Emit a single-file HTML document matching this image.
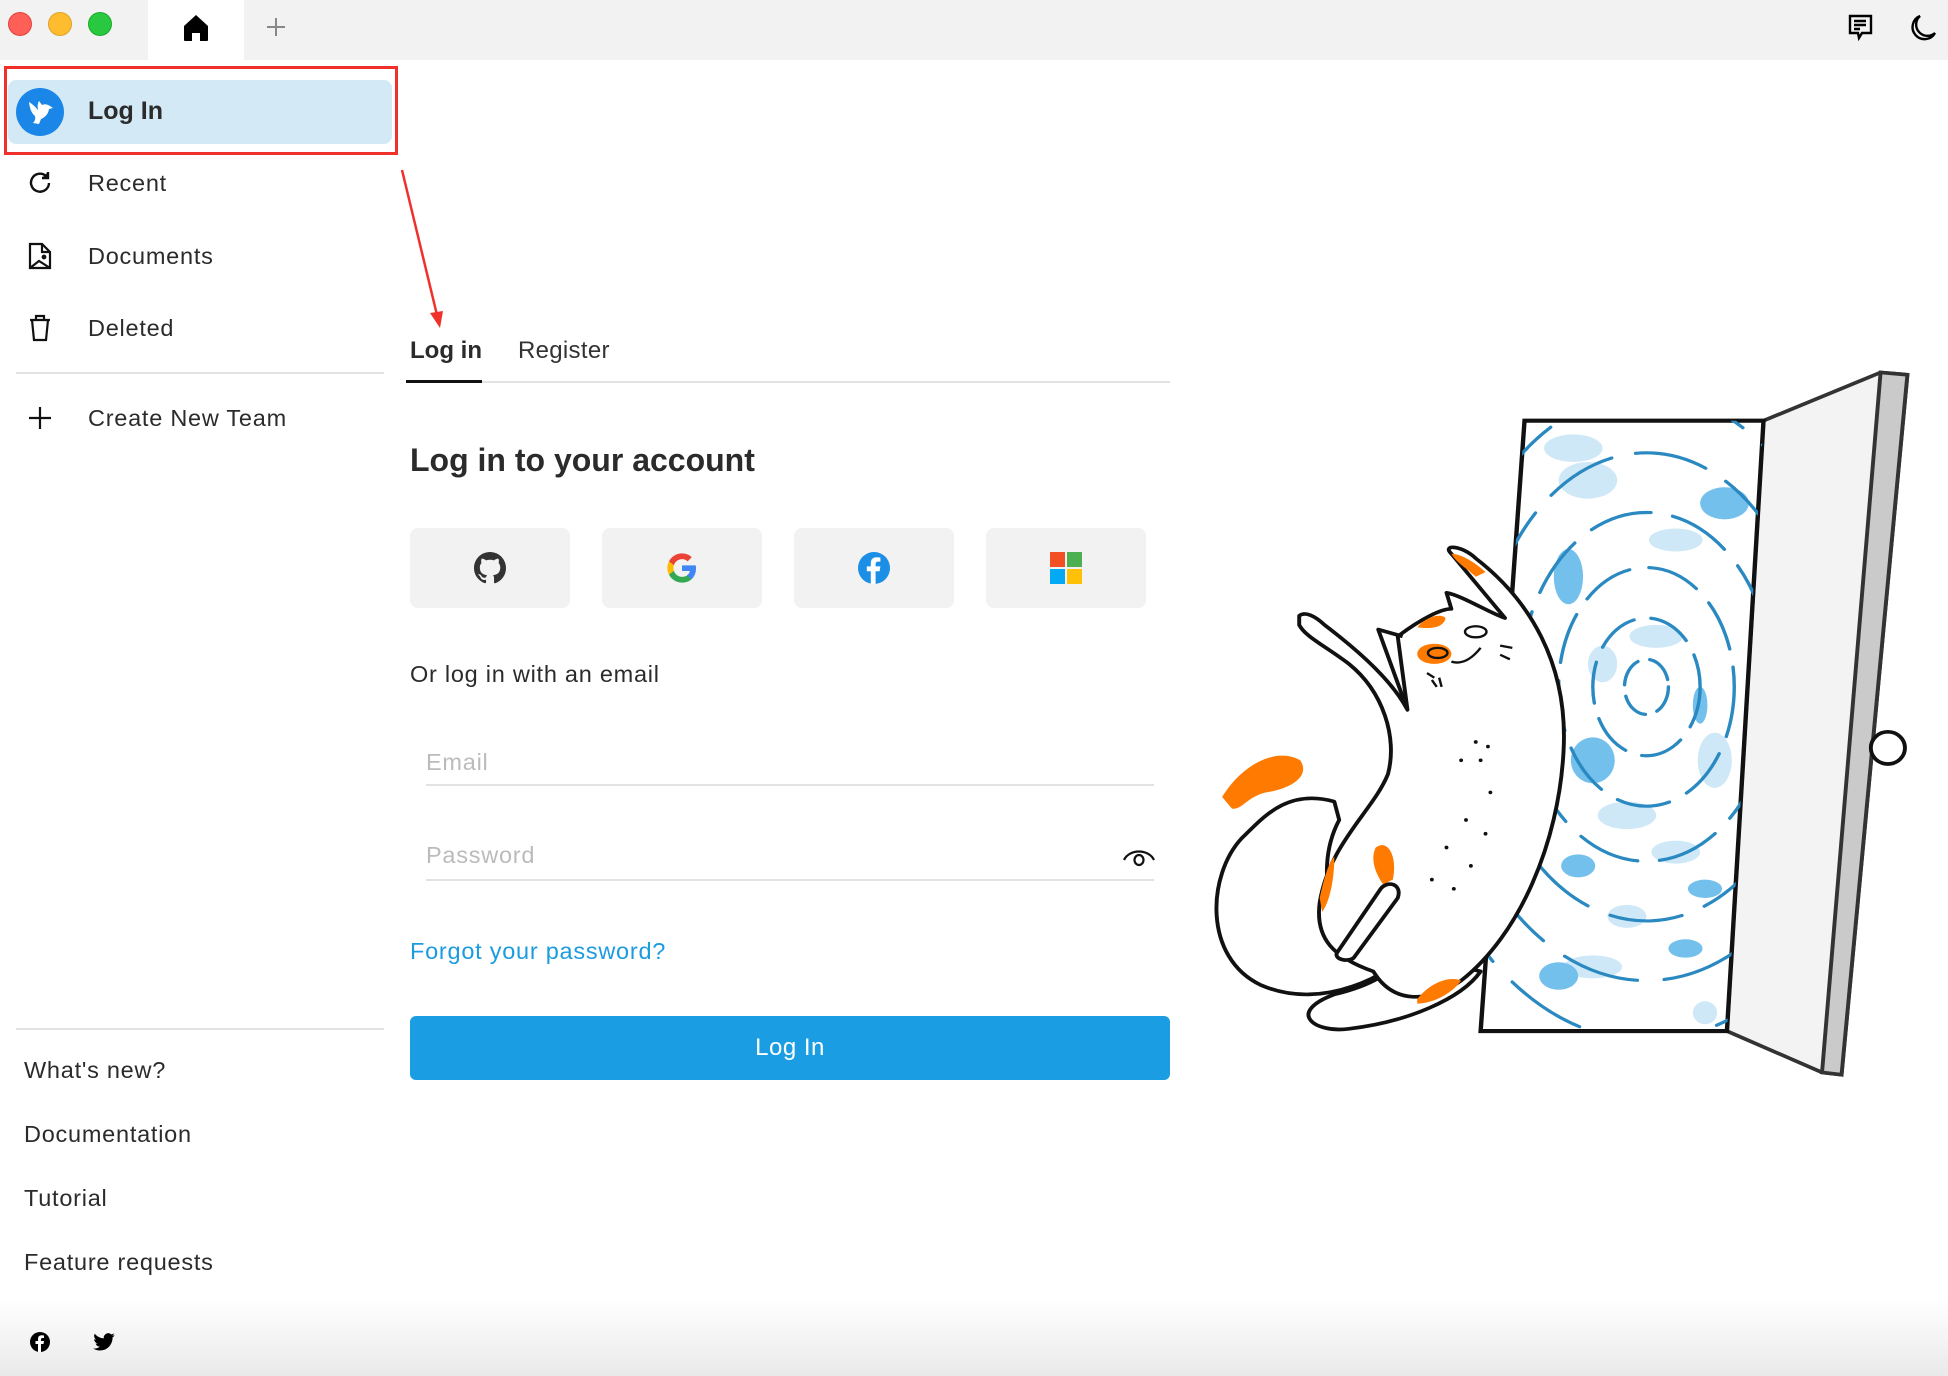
<!DOCTYPE html>
<html><head><meta charset="utf-8"><style>
*{margin:0;padding:0;box-sizing:border-box}
body{width:1948px;height:1376px;position:relative;overflow:hidden;background:#fff;font-family:"Liberation Sans",sans-serif;color:#2b2b2b}
.a{position:absolute}
.t{position:absolute;white-space:nowrap;line-height:1}
.s{font-size:23.5px;letter-spacing:0.75px}
</style></head><body>
<div class="a" style="left:0;top:0;width:1948px;height:60px;background:#f2f2f2"></div>
<div class="a" style="left:148px;top:0;width:96px;height:60px;background:#fff"></div>
<div class="a" style="left:8px;top:12px;width:24px;height:24px;border-radius:50%;background:#fe5f57;border:1px solid #e0443e"></div>
<div class="a" style="left:48px;top:12px;width:24px;height:24px;border-radius:50%;background:#febc2e;border:1px solid #dea123"></div>
<div class="a" style="left:88px;top:12px;width:24px;height:24px;border-radius:50%;background:#28c840;border:1px solid #1aab29"></div>
<svg class="a" style="left:183px;top:14px" width="26" height="28" viewBox="0 0 26 28"><path d="M13 1 L25 12 V26 Q25 27 24 27 H17 V19 H9 V27 H2 Q1 27 1 26 V12 Z" fill="#000"/></svg>
<svg class="a" style="left:266px;top:17px" width="20" height="20"><path d="M10 1V19M1 10H19" stroke="#888" stroke-width="2"/></svg>
<svg class="a" style="left:1847px;top:14px" width="28" height="28" viewBox="0 0 28 28" fill="none" stroke="#000" stroke-width="2.4"><path d="M3 2H24V19H15L12 24L11 19H3Z"/><path d="M7 7H19M7 11H19M7 15H13"/></svg>
<svg class="a" style="left:1908px;top:13px" width="30" height="30" viewBox="0 0 30 30" fill="none" stroke="#000" stroke-width="2.4"><path d="M12 3A12 12 0 1 0 27 20A11 11 0 0 1 12 3Z"/></svg>

<div class="a" style="left:4px;top:66px;width:394px;height:89px;border:3px solid #f0302a"></div>
<div class="a" style="left:8px;top:80px;width:384px;height:64px;border-radius:8px;background:#d3e9f6"></div>
<div class="a" style="left:16px;top:88px;width:48px;height:48px;border-radius:50%;background:#1a87e8"></div>
<svg class="a" style="left:24px;top:96px" width="32" height="32" viewBox="0 0 32 32"><path d="M5 6 Q10 9 14 14 Q13 8 15 5 L18 9 Q22 7 26 10 L29 12 L25 13 Q24 20 17 23 L15 28 L9 27 Q12 24 11 20 Q6 16 5 6Z" fill="#fff"/></svg>
<div class="t" style="left:88px;top:99px;font-size:25px;font-weight:bold;color:#2b2b2b">Log In</div>

<svg class="a" style="left:27px;top:170px" width="26" height="26" viewBox="0 0 26 26" fill="none" stroke="#111" stroke-width="2.4"><path d="M22 13A9 9 0 1 1 19 6"/><path d="M21 2V8H15" fill="#111"/></svg>
<div class="t s" style="left:88px;top:172px">Recent</div>
<svg class="a" style="left:28px;top:242px" width="24" height="28" viewBox="0 0 24 28" fill="none" stroke="#111" stroke-width="2.2"><path d="M2 2H14L22 10V26H2Z"/><path d="M14 2V10H22"/><path d="M2 26L11 19L22 26"/><circle cx="16" cy="15" r="1.3" fill="#111"/></svg>
<div class="t s" style="left:88px;top:245px">Documents</div>
<svg class="a" style="left:28px;top:314px" width="24" height="28" viewBox="0 0 24 28" fill="none" stroke="#111" stroke-width="2.2"><path d="M2 6H22M8 6V2H16V6M4 6L6 26H18L20 6"/></svg>
<div class="t s" style="left:88px;top:317px">Deleted</div>
<div class="a" style="left:16px;top:372px;width:368px;height:2px;background:#e3e3e3"></div>
<svg class="a" style="left:28px;top:406px" width="24" height="24"><path d="M12 1V23M1 12H23" stroke="#111" stroke-width="2.2"/></svg>
<div class="t s" style="left:88px;top:407px">Create New Team</div>

<div class="a" style="left:16px;top:1028px;width:368px;height:2px;background:#e3e3e3"></div>
<div class="t s" style="left:24px;top:1059px">What's new?</div>
<div class="t s" style="left:24px;top:1123px">Documentation</div>
<div class="t s" style="left:24px;top:1187px">Tutorial</div>
<div class="t s" style="left:24px;top:1251px">Feature requests</div>
<div class="a" style="left:0;top:1300px;width:1948px;height:76px;background:linear-gradient(#fff,#e9e9e9)"></div>
<svg class="a" style="left:30px;top:1332px" width="20" height="20" viewBox="0 0 20 20"><circle cx="10" cy="10" r="10" fill="#000"/><path d="M11 20V12H13.5L14 9H11V7.5Q11 6 12.5 6H14V3.5Q13 3.3 11.8 3.3Q8 3.3 8 7V9H5.5V12H8V20Z" fill="#fff"/></svg>
<svg class="a" style="left:93px;top:1333px" width="22" height="18" viewBox="0 0 24 20"><path d="M24 2.3A10 10 0 0 1 21.2 3 5 5 0 0 0 23.3 .4 10 10 0 0 1 20.2 1.6 5 5 0 0 0 11.8 6 14 14 0 0 1 1.7 .9 5 5 0 0 0 3.2 7.4 5 5 0 0 1 1 6.8 5 5 0 0 0 4.9 11.6 5 5 0 0 1 2.7 11.7 5 5 0 0 0 7.3 15.1 10 10 0 0 1 0 17.2 14 14 0 0 0 7.5 19.4C16.6 19.4 21.5 11.9 21.5 5.4V4.8A10 10 0 0 0 24 2.3Z" fill="#000"/></svg>

<svg class="a" style="left:395px;top:165px" width="50" height="170"><path d="M7 5L42 150" stroke="#f0302a" stroke-width="2.5"/><path d="M35 148L45 163L48 146Z" fill="#f0302a"/></svg>

<div class="t" style="left:410px;top:339px;font-size:24px;font-weight:bold;color:#2b2b2b">Log in</div>
<div class="t" style="left:518px;top:339px;font-size:24px;color:#333;letter-spacing:0.3px">Register</div>
<div class="a" style="left:410px;top:381px;width:760px;height:2px;background:#e3e3e3"></div>
<div class="a" style="left:406px;top:380px;width:76px;height:3px;background:#111"></div>
<div class="t" style="left:410px;top:444px;font-size:32px;font-weight:bold;color:#2b2b2b">Log in to your account</div>

<div class="a" style="left:410px;top:528px;width:160px;height:80px;border-radius:8px;background:#f2f2f2"></div>
<div class="a" style="left:602px;top:528px;width:160px;height:80px;border-radius:8px;background:#f2f2f2"></div>
<div class="a" style="left:794px;top:528px;width:160px;height:80px;border-radius:8px;background:#f2f2f2"></div>
<div class="a" style="left:986px;top:528px;width:160px;height:80px;border-radius:8px;background:#f2f2f2"></div>
<svg class="a" style="left:474px;top:552px" width="32" height="32" viewBox="0 0 16 16"><path fill="#333" d="M8 0C3.58 0 0 3.58 0 8c0 3.54 2.29 6.530 5.47 7.59.4.07.55-.17.55-.38v-1.33c-2.23.48-2.7-1.07-2.7-1.07-.36-.92-.89-1.17-.89-1.17-.73-.5.06-.49.06-.49.8.06 1.23.83 1.23.83.71 1.22 1.87.87 2.33.66.07-.52.28-.87.51-1.07-1.78-.2-3.64-.89-3.64-3.95 0-.87.31-1.59.82-2.15-.08-.2-.36-1.02.08-2.12 0 0 .67-.21 2.2.82.64-.18 1.32-.27 2-.27.68 0 1.36.09 2 .27 1.53-1.04 2.2-.82 2.2-.82.44 1.1.16 1.92.08 2.12.51.56.82 1.27.82 2.15 0 3.07-1.87 3.75-3.65 3.95.29.25.54.73.54 1.48v2.2c0 .21.15.46.55.38A8 8 0 0 0 16 8c0-4.42-3.58-8-8-8z"/></svg>
<svg class="a" style="left:666px;top:552px" width="32" height="32" viewBox="0 0 48 48"><path fill="#4285F4" d="M45 24.5c0-1.6-.1-3.1-.4-4.5H24v8.5h11.8c-.5 2.7-2.1 5-4.4 6.6v5.5h7.1C42.6 36.8 45 31.2 45 24.5z"/><path fill="#34A853" d="M24 46c5.9 0 10.9-2 14.5-5.3l-7.1-5.5c-2 1.3-4.5 2.1-7.4 2.1-5.7 0-10.5-3.8-12.2-9H4.5v5.7C8.1 41.1 15.5 46 24 46z"/><path fill="#FBBC05" d="M11.8 28.3c-.4-1.3-.7-2.8-.7-4.3s.3-3 .7-4.3V14H4.5C3 17 2 20.4 2 24s1 7 2.5 10z"/><path fill="#EA4335" d="M24 10.7c3.2 0 6.1 1.1 8.4 3.3l6.3-6.3C34.9 4.1 29.9 2 24 2 15.5 2 8.1 6.9 4.5 14l7.3 5.7c1.7-5.2 6.5-9 12.2-9z"/></svg>
<svg class="a" style="left:858px;top:552px" width="32" height="32" viewBox="0 0 20 20"><circle cx="10" cy="10" r="10" fill="#1b8fe6"/><path d="M11 20V12H13.5L14 9H11V7.5Q11 6 12.5 6H14V3.5Q13 3.3 11.8 3.3Q8 3.3 8 7V9H5.5V12H8V20Z" fill="#fff"/></svg>
<svg class="a" style="left:1050px;top:552px" width="32" height="32"><rect x="0" y="0" width="15" height="15" fill="#f25022"/><rect x="17" y="0" width="15" height="15" fill="#4caf50"/><rect x="0" y="17" width="15" height="15" fill="#03a9f4"/><rect x="17" y="17" width="15" height="15" fill="#ffc107"/></svg>

<div class="t s" style="left:410px;top:663px">Or log in with an email</div>
<div class="t s" style="left:426px;top:751px;color:#bbb">Email</div>
<div class="a" style="left:426px;top:784px;width:728px;height:2px;background:#e3e3e3"></div>
<div class="t s" style="left:426px;top:844px;color:#bbb">Password</div>
<div class="a" style="left:426px;top:879px;width:728px;height:2px;background:#e3e3e3"></div>
<svg class="a" style="left:1122px;top:846px" width="34" height="22" viewBox="0 0 34 22" fill="none" stroke="#111" stroke-width="2.2"><path d="M2 14A16 13 0 0 1 32 14"/><ellipse cx="17" cy="14" rx="4.5" ry="5"/></svg>
<div class="t s" style="left:410px;top:940px;color:#1b9be0">Forgot your password?</div>
<div class="a" style="left:410px;top:1016px;width:760px;height:64px;border-radius:6px;background:#1a9de3"></div>
<div class="t" style="left:410px;top:1036px;width:760px;text-align:center;font-size:24px;color:#fff;letter-spacing:0.5px">Log In</div>

<svg class="a" style="left:1188px;top:361px" width="755" height="716" viewBox="0 0 1548 1560" preserveAspectRatio="none">
<defs><clipPath id="p"><path d="M690 130L1180 130L1105 1460L600 1460Z"/></clipPath></defs>
<path d="M1180 130L1420 25L1475 30L1340 1555L1300 1550L1105 1460Z" fill="#f3f3f3" stroke="#333" stroke-width="8"/>
<path d="M1420 25L1475 30L1340 1555L1300 1550Z" fill="#cacaca" stroke="#333" stroke-width="8"/>
<circle cx="1435" cy="843" r="35" fill="#fff" stroke="#111" stroke-width="8"/>
<path d="M690 130L1180 130L1105 1460L600 1460Z" fill="#fff" stroke="#111" stroke-width="9"/>
<g clip-path="url(#p)" fill="none" stroke="#2a89c0" stroke-width="7" stroke-linecap="round">
<g fill="#cfe8f7" stroke="none"><ellipse cx="790" cy="190" rx="60" ry="30"/><ellipse cx="820" cy="260" rx="60" ry="40"/><ellipse cx="1000" cy="390" rx="55" ry="25"/><ellipse cx="960" cy="600" rx="55" ry="25"/><ellipse cx="850" cy="660" rx="30" ry="40"/><ellipse cx="900" cy="990" rx="60" ry="30"/><ellipse cx="1000" cy="1070" rx="50" ry="25"/><ellipse cx="830" cy="1320" rx="60" ry="25"/><ellipse cx="1060" cy="1420" rx="25" ry="25"/><ellipse cx="1080" cy="870" rx="35" ry="60"/><ellipse cx="900" cy="1210" rx="40" ry="25"/></g>
<g fill="#74c0ec" stroke="none"><ellipse cx="1100" cy="310" rx="50" ry="35"/><ellipse cx="780" cy="470" rx="30" ry="60"/><ellipse cx="830" cy="870" rx="45" ry="50"/><ellipse cx="800" cy="1100" rx="35" ry="25"/><ellipse cx="760" cy="1340" rx="40" ry="30"/><ellipse cx="1020" cy="1280" rx="35" ry="20"/><ellipse cx="1060" cy="1150" rx="35" ry="20"/><ellipse cx="1050" cy="750" rx="15" ry="40"/></g>
<ellipse cx="940" cy="710" rx="45" ry="60" stroke-dasharray="60 25"/>
<ellipse cx="940" cy="710" rx="110" ry="150" stroke-dasharray="90 35"/>
<ellipse cx="940" cy="710" rx="180" ry="260" stroke-dasharray="110 40"/>
<ellipse cx="940" cy="710" rx="260" ry="380" stroke-dasharray="130 45"/>
<ellipse cx="940" cy="710" rx="340" ry="510" stroke-dasharray="150 50"/>
<ellipse cx="940" cy="710" rx="420" ry="640" stroke-dasharray="160 55"/>
<ellipse cx="940" cy="710" rx="500" ry="770" stroke-dasharray="170 60"/>
</g>
<g stroke="#111" stroke-width="8" stroke-linejoin="round">
<path d="M430 1280C300 1300 250 1120 310 1000 L300 960 C200 930 150 1000 110 1040 C40 1120 30 1300 150 1360 C280 1420 420 1330 450 1290Z" fill="#fff"/>
<path d="M300 1380 C200 1420 260 1465 330 1455 C450 1440 560 1390 600 1330 L450 1290 C420 1330 380 1360 300 1380Z" fill="#fff"/>
<path d="M228 555 C240 545 260 555 280 575 C360 640 420 700 450 760 L 430 600 C 480 560 520 540 540 540 L 530 505 C 560 510 620 550 650 560 L 540 420 C 520 400 560 400 590 430 C 700 520 780 660 770 850 C 760 1050 680 1250 560 1350 C 490 1400 420 1400 380 1330 C 300 1300 260 1260 270 1180 C 290 1050 380 980 410 900 C 430 820 400 720 330 660 C 280 620 240 600 228 575Z" fill="#fff"/>
<path d="M440 600 L390 585 L450 760" fill="none"/>
<path d="M305 1290 L395 1150 C 410 1130 440 1140 430 1170 L340 1300 C330 1310 300 1305 305 1290Z" fill="#fff"/>
</g>
<g fill="#ff7a00">
<path d="M70 950 C110 880 180 840 230 870 C250 900 220 930 160 940 C120 950 110 980 90 975Z"/>
<path d="M385 1060 C410 1040 430 1080 420 1130 L400 1140 C380 1110 375 1080 385 1060Z"/>
<path d="M470 1390 C500 1350 540 1340 560 1350 C540 1380 500 1400 470 1400Z"/>
<path d="M270 1170 C280 1120 290 1090 300 1080 C300 1130 290 1180 275 1200Z"/>
<ellipse cx="505" cy="638" rx="35" ry="22"/>
<path d="M470 580 C490 555 520 550 528 560 C525 580 500 585 470 580Z"/>
<path d="M540 420 C560 420 590 440 610 460 L590 470 C570 450 550 440 540 420Z"/>
</g>
<g fill="none" stroke="#111" stroke-width="5"><ellipse cx="590" cy="590" rx="22" ry="12"/><ellipse cx="512" cy="636" rx="20" ry="11"/><path d="M540 655 Q570 665 600 625"/><path d="M490 680L505 690M500 695L510 710M515 690L520 710M640 620L665 625M640 640L660 650"/></g>
<g fill="#111"><circle cx="590" cy="830" r="4"/><circle cx="615" cy="840" r="4"/><circle cx="600" cy="870" r="4"/><circle cx="560" cy="870" r="4"/><circle cx="620" cy="940" r="4"/><circle cx="570" cy="1000" r="4"/><circle cx="610" cy="1030" r="4"/><circle cx="530" cy="1060" r="4"/><circle cx="580" cy="1100" r="4"/><circle cx="500" cy="1130" r="4"/><circle cx="545" cy="1150" r="4"/></g>
</svg>
</body></html>
